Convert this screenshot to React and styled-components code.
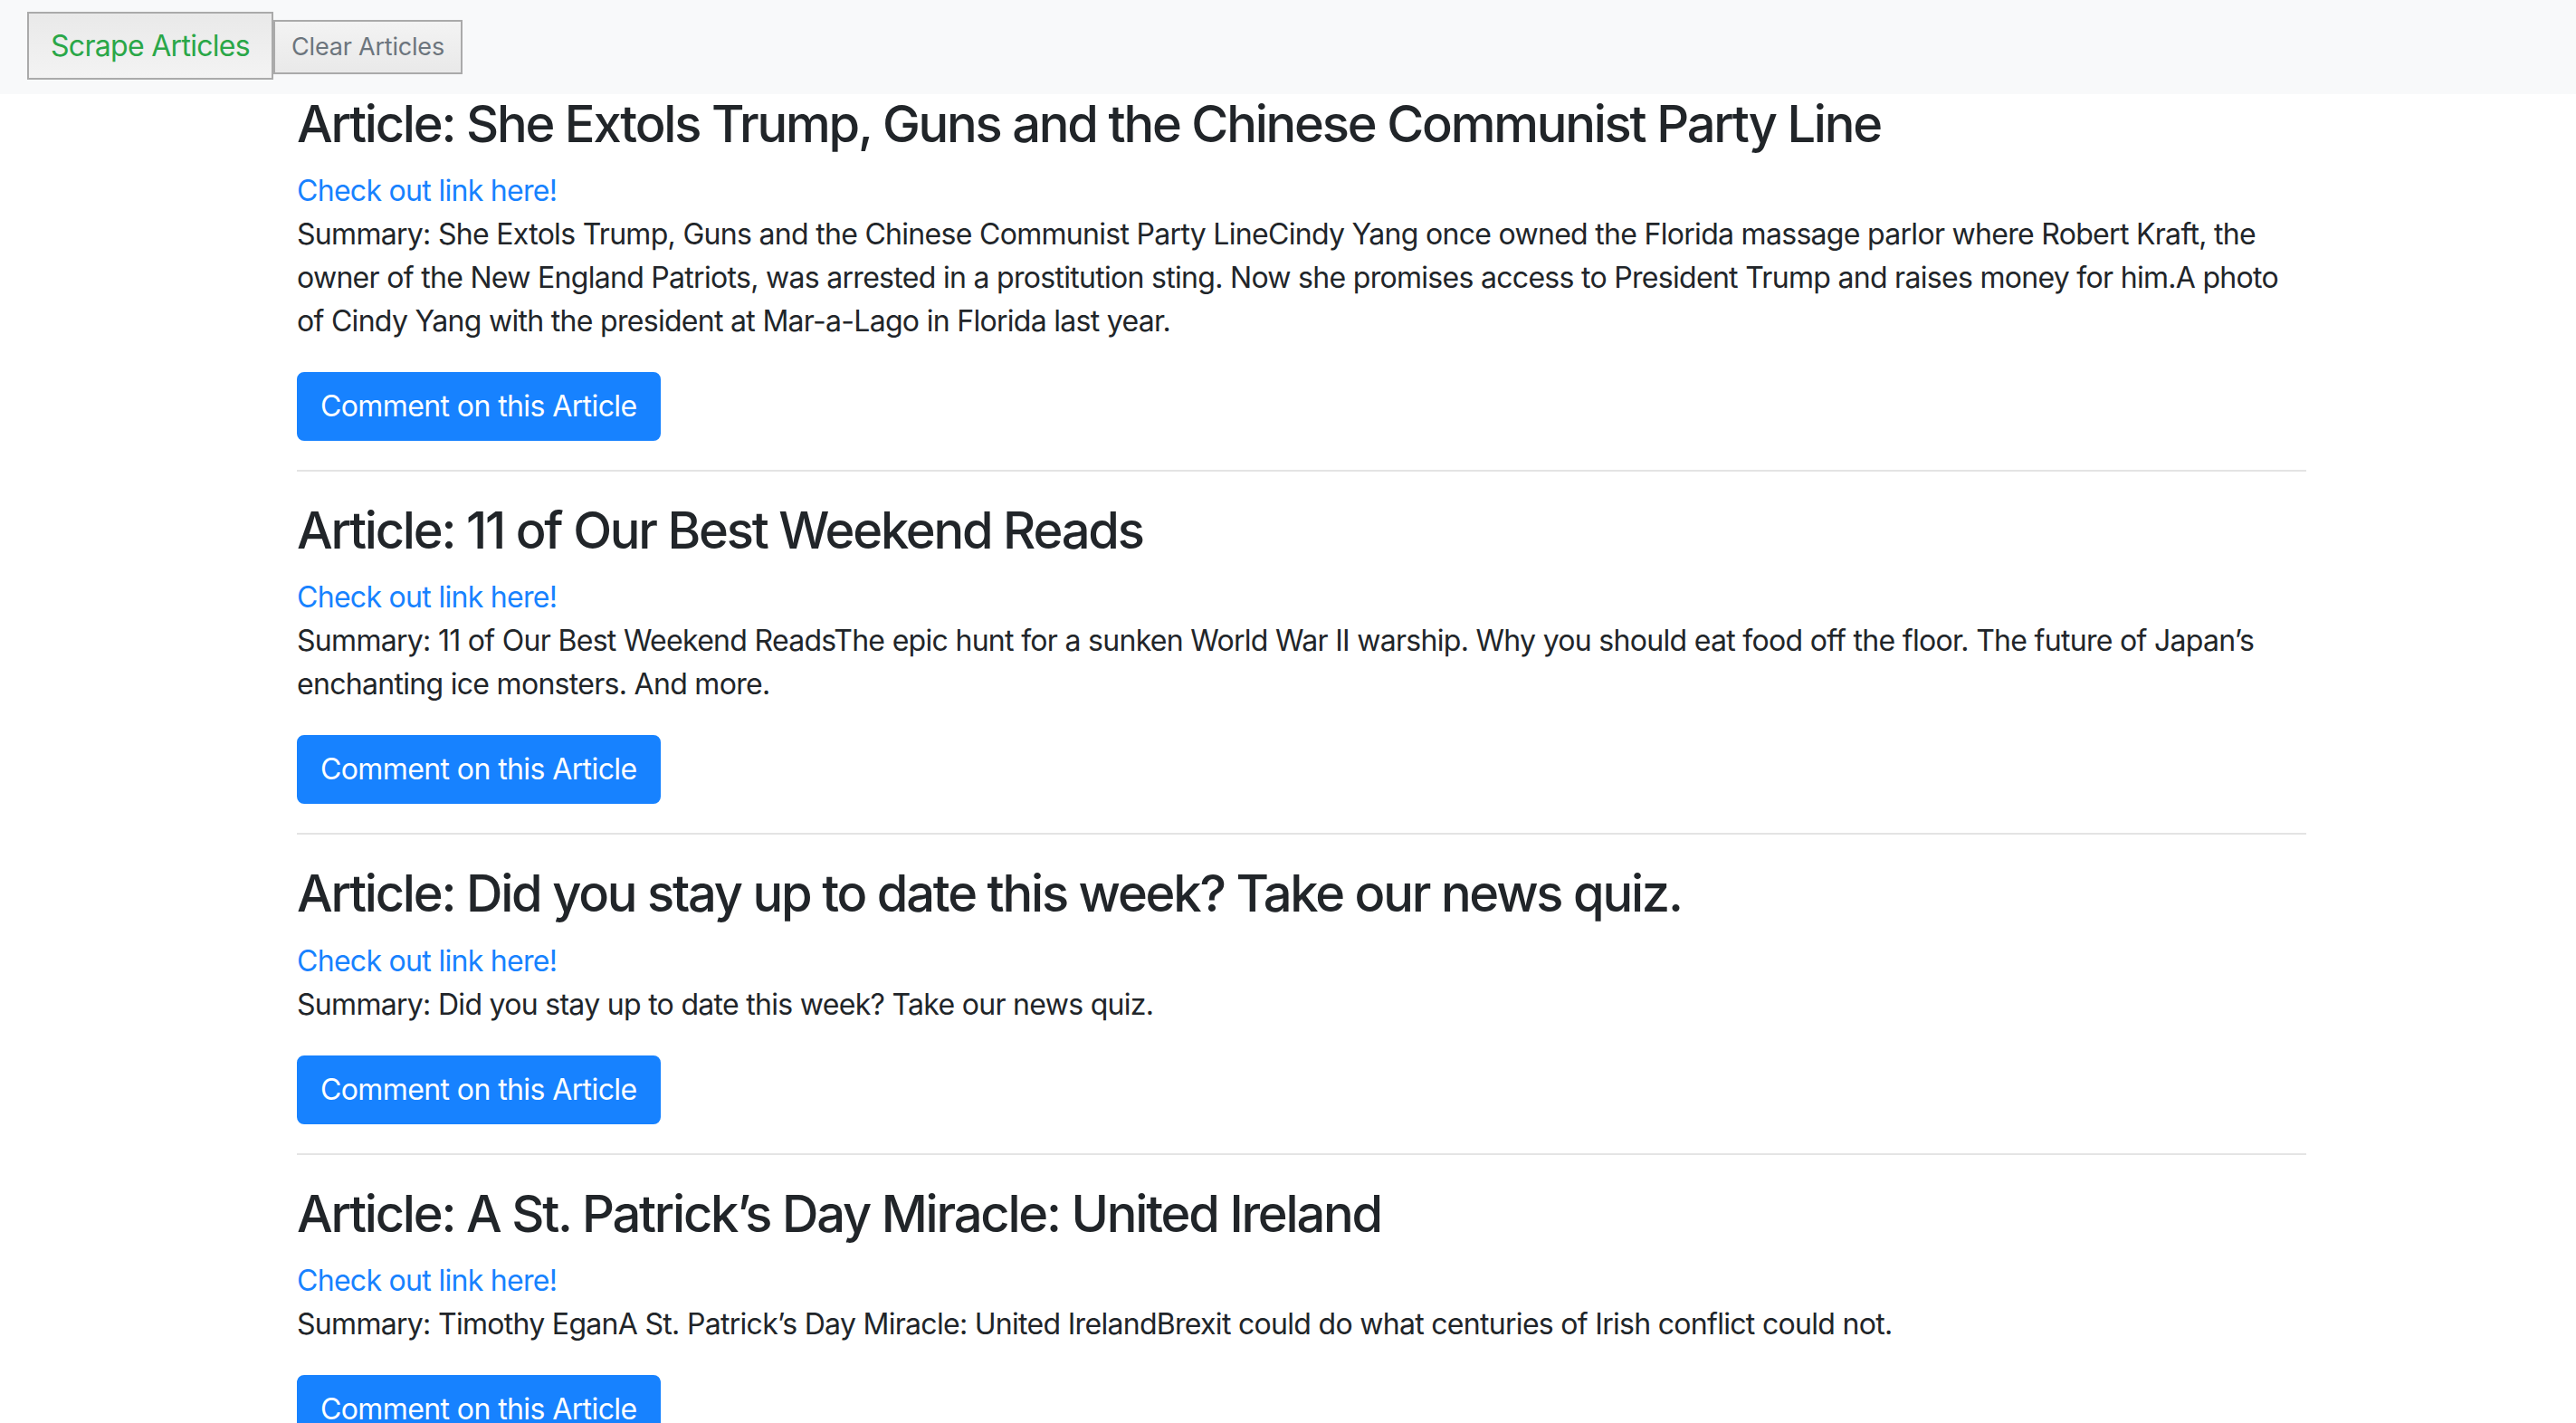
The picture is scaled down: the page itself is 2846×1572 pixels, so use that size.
import React from 'react';
import styled, { createGlobalStyle } from 'styled-components';

const FONT = 'Inter, "Noto Sans", "Liberation Sans", sans-serif';

const articles = [
  {
    title: 'She Extols Trump, Guns and the Chinese Communist Party Line',
    summary:
      'She Extols Trump, Guns and the Chinese Communist Party LineCindy Yang once owned the Florida massage parlor where Robert Kraft, the owner of the New England Patriots, was arrested in a prostitution sting. Now she promises access to President Trump and raises money for him.A photo of Cindy Yang with the president at Mar-a-Lago in Florida last year.',
  },
  {
    title: '11 of Our Best Weekend Reads',
    summary:
      '11 of Our Best Weekend ReadsThe epic hunt for a sunken World War II warship. Why you should eat food off the floor. The future of Japan\u2019s enchanting ice monsters. And more.',
  },
  {
    title: 'Did you stay up to date this week? Take our news quiz.',
    summary: 'Did you stay up to date this week? Take our news quiz.',
  },
  {
    title: 'A St. Patrick\u2019s Day Miracle: United Ireland',
    summary:
      'Timothy EganA St. Patrick\u2019s Day Miracle: United IrelandBrexit could do what centuries of Irish conflict could not.',
  },
];

const GlobalStyle = createGlobalStyle`
  html, body {
    margin: 0;
    padding: 0;
    background: #fff;
  }
  body {
    font-family: ${FONT};
    font-size: 32px;
    line-height: 1.5;
    letter-spacing: -0.7px;
    color: #212529;
  }
  * {
    box-sizing: border-box;
  }
`;

const Navbar = styled.nav`
  display: flex;
  align-items: center;
  height: 104px;
  padding: 0 30px;
  background-color: #f8f9fa;
`;

const ScrapeButton = styled.button`
  font-family: ${FONT};
  font-size: 32px;
  line-height: 47px;
  letter-spacing: -0.7px;
  padding: 12px 24px;
  margin-top: -4px;
  color: #2aa748;
  border: 2px solid #aaaaaa;
  border-radius: 0;
  background: linear-gradient(#e9e9e9, #f3f3f3);
  cursor: pointer;
`;

const ClearButton = styled.button`
  font-family: ${FONT};
  font-size: 27px;
  line-height: 32px;
  letter-spacing: -0.2px;
  padding: 12px 18px;
  color: #6c757d;
  border: 2px solid #aaaaaa;
  border-radius: 0;
  background: linear-gradient(#f3f3f3, #e9e9e9);
  cursor: pointer;
`;

const Container = styled.main`
  width: 2220px;
  margin-left: calc(50% - 1095px);
`;

const Article = styled.article`
  display: flex;
  flex-direction: column;
  align-items: flex-start;
`;

const Title = styled.h3`
  margin: 0 0 16px;
  font-size: 56px;
  font-weight: 500;
  line-height: 1.2;
  letter-spacing: -2.2px;
`;

const Link = styled.a`
  display: block;
  color: #1782ff;
  text-decoration: none;
`;

const Summary = styled.p`
  margin: 0 0 32px;
`;

const CommentButton = styled.button`
  font-family: ${FONT};
  font-size: 32px;
  line-height: 48px;
  letter-spacing: -0.6px;
  padding: 12px 24px;
  color: #fff;
  background-color: #1782ff;
  border: 2px solid #1782ff;
  border-radius: 8px;
  cursor: pointer;
`;

const Divider = styled.hr`
  width: 100%;
  margin: 32px 0;
  border: 0;
  border-top: 2px solid #e4e4e4;
`;

const App = () => (
  <>
    <GlobalStyle />
    <Navbar>
      <ScrapeButton>Scrape Articles</ScrapeButton>
      <ClearButton>Clear Articles</ClearButton>
    </Navbar>
    <Container>
      {articles.map((a) => (
        <Article key={a.title}>
          <Title>{`Article: ${a.title}`}</Title>
          <Link href="#">Check out link here!</Link>
          <Summary>{`Summary: ${a.summary}`}</Summary>
          <CommentButton>Comment on this Article</CommentButton>
          <Divider />
        </Article>
      ))}
    </Container>
  </>
);

export default App;
